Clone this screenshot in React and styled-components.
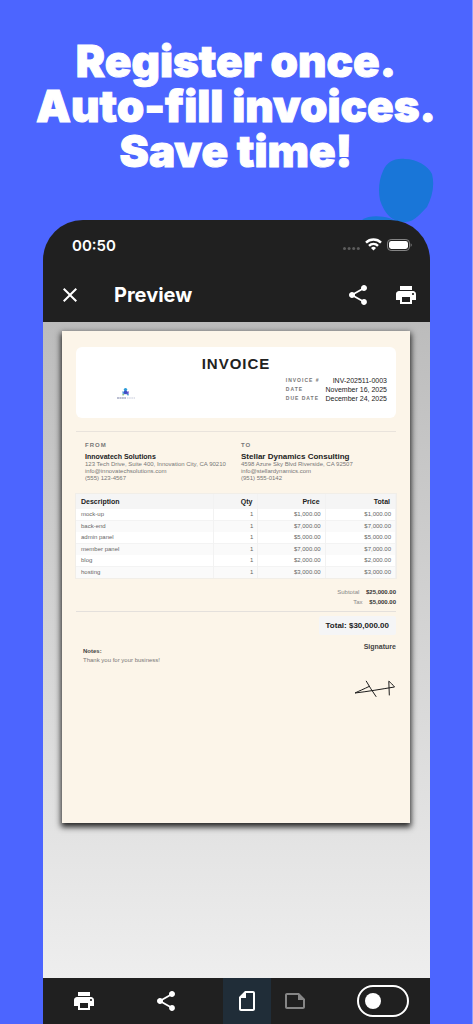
import React, { useState } from "react";
import styled, { createGlobalStyle } from "styled-components";
import { MdClose, MdOutlineNote, MdPrint, MdShare } from "react-icons/md";

const items = [
  { name: "mock-up", qty: 1, price: "$1,000.00" },
  { name: "back-end", qty: 1, price: "$7,000.00" },
  { name: "admin panel", qty: 1, price: "$5,000.00" },
  { name: "member panel", qty: 1, price: "$7,000.00" },
  { name: "blog", qty: 1, price: "$2,000.00" },
  { name: "hosting", qty: 1, price: "$3,000.00" },
];

const StatusIcons = () => (
  <svg width="70" height="16" viewBox="0 0 70 16" aria-hidden="true">
    <g fill="#5c5c5c">
      <circle cx="1.5" cy="11.5" r="1.5" />
      <circle cx="6.1" cy="11.5" r="1.5" />
      <circle cx="10.7" cy="11.5" r="1.5" />
      <circle cx="15.3" cy="11.5" r="1.5" />
    </g>
    <g fill="none" stroke="#fff" strokeWidth="2.4">
      <path d="M23 5.6a10.6 10.6 0 0 1 15 0" />
      <path d="M26 8.8a6.3 6.3 0 0 1 9 0" />
    </g>
    <path d="M30.5 13.6l-2.5-2.500a3.500 3.500 0 0 1 5 0z" fill="#fff" />
    <rect x="44.5" y="2.500" width="22" height="11" rx="3.600" fill="none" stroke="#858585" />
    <rect x="46" y="4" width="19" height="8" rx="2.400" fill="#fff" />
    <path d="M67.700 6.300v3.600c1.300-.6 1.300-3 0-3.600z" fill="#858585" />
  </svg>
);

const CompanyLogo = () => (
  <svg width="20" height="14" viewBox="0 0 20 14" role="img" aria-label="Innovatech logo">
    <circle cx="9.5" cy="2.6" r="1.7" fill="#2b9bd8" />
    <path d="M6.3 4.3l2.4.4v2.6l-2 1.2-.2-2z" fill="#5aa5dd" />
    <path d="M12.8 4.3l-2.4.4v2.6l2 1.2.2-2z" fill="#6b55cf" />
    <circle cx="9.5" cy="5.4" r="1.8" fill="#3f4fc4" />
    <circle cx="7.2" cy="7.7" r=".8" fill="#9acb62" />
    <circle cx="11.9" cy="7.7" r=".8" fill="#36b8cf" />
    <path d="M1 11h9" stroke="#7980a5" strokeWidth="1.2" strokeDasharray="2 .4" />
    <path d="M11 11h8" stroke="#c3c7d8" strokeDasharray="1.5 .7" />
  </svg>
);

const App = () => {
  const [landscape, setLandscape] = useState(false);
  const [debug, setDebug] = useState(false);

  return (
    <Page>
      <GlobalStyle />
      <Headline>
        Register once.
        <br />
        Auto-fill invoices.
        <br />
        Save time!
      </Headline>
      <PhoneWrapper>
        <Blob viewBox="0 0 72 66" aria-hidden="true">
          <path d="M43 1C32 0 25 4 21 13C17 22 16 32 18 42C22 54 29 64 42 64C52 65 60 54 65 49C70 39 73 28 70 16C66 8 55 1 43 1Z" />
          <path d="M0 62C7 57 19 58 27 60L42 66H0Z" />
        </Blob>
        <Phone>
          <StatusBar>
            <time>00:50</time>
            <StatusIcons />
          </StatusBar>
          <AppBar>
            <IconButton aria-label="Close">
              <MdClose />
            </IconButton>
            <h2>Preview</h2>
            <IconButton aria-label="Share">
              <MdShare />
            </IconButton>
            <IconButton aria-label="Print">
              <MdPrint />
            </IconButton>
          </AppBar>

          <PreviewArea>
            <Paper>
              <InvoiceHead>
                <h3>INVOICE</h3>
                <div>
                  <CompanyLogo />
                  <Meta>
                    <dt>INVOICE #</dt>
                    <dd>INV-202511-0003</dd>
                    <dt>DATE</dt>
                    <dd>November 16, 2025</dd>
                    <dt>DUE DATE</dt>
                    <dd>December 24, 2025</dd>
                  </Meta>
                </div>
              </InvoiceHead>

              <Parties>
                <Party>
                  <h4>FROM</h4>
                  <PartyName>Innovatech Solutions</PartyName>
                  <p>123 Tech Drive, Suite 400, Innovation City, CA 90210</p>
                  <p>info@innovatechsolutions.com</p>
                  <p>(555) 123-4567</p>
                </Party>
                <Party>
                  <h4>TO</h4>
                  <PartyName $large>Stellar Dynamics Consulting</PartyName>
                  <p>4598 Azure Sky Blvd Riverside, CA 92507</p>
                  <p>info@stellardynamics.com</p>
                  <p>(951) 555-0142</p>
                </Party>
              </Parties>

              <ItemsTable>
                <colgroup>
                  <col style={{ width: "43%" }} />
                  <col style={{ width: "14%" }} />
                  <col style={{ width: "21%" }} />
                  <col style={{ width: "22%" }} />
                </colgroup>
                <thead>
                  <tr>
                    <th>Description</th>
                    <th>Qty</th>
                    <th>Price</th>
                    <th>Total</th>
                  </tr>
                </thead>
                <tbody>
                  {items.map((item) => (
                    <tr key={item.name}>
                      <td>{item.name}</td>
                      <td>{item.qty}</td>
                      <td>{item.price}</td>
                      <td>{item.price}</td>
                    </tr>
                  ))}
                </tbody>
              </ItemsTable>

              <Sums>
                <p>
                  Subtotal <b>$25,000.00</b>
                </p>
                <p>
                  Tax <b>$5,000.00</b>
                </p>
              </Sums>
              <GrandTotal>
                <strong>Total: $30,000.00</strong>
              </GrandTotal>

              <Closing>
                <Notes>
                  <b>Notes:</b>
                  <p>Thank you for your business!</p>
                </Notes>
                <Signature>
                  <b>Signature</b>
                  <svg width="42" height="18" viewBox="0 0 42 18" role="img" aria-label="Signature">
                    <path d="M15 6.5C10 9 5 11 1 13C14 11.5 28 9 40.5 7C39 5 36.5 2.5 34.8 1.2L35.3 15" />
                    <path d="M12.3 1.2C15 6 18.5 11.5 22 16.5" />
                  </svg>
                </Signature>
              </Closing>
            </Paper>
          </PreviewArea>

          <BottomBar>
            <IconButton aria-label="Print">
              <MdPrint />
            </IconButton>
            <IconButton aria-label="Share">
              <MdShare />
            </IconButton>
            <Orientation>
              <OrientationButton
                aria-label="Portrait"
                $active={!landscape}
                $rotated
                onClick={() => setLandscape(false)}
              >
                <MdOutlineNote />
              </OrientationButton>
              <OrientationButton
                aria-label="Landscape"
                $active={landscape}
                onClick={() => setLandscape(true)}
              >
                <MdOutlineNote />
              </OrientationButton>
            </Orientation>
            <SwitchLabel>
              <Switch
                type="checkbox"
                role="switch"
                aria-label="Debug"
                checked={debug}
                onChange={(e) => setDebug(e.target.checked)}
              />
            </SwitchLabel>
          </BottomBar>
        </Phone>
      </PhoneWrapper>
    </Page>
  );
};

const GlobalStyle = createGlobalStyle`
  * {
    box-sizing: border-box;
  }
  body {
    margin: 0;
    background: #4c65ff;
  }
  h1, h2, h3, h4, p, dl, dd {
    margin: 0;
  }
`;

const Page = styled.main`
  min-height: 100vh;
  display: flex;
  flex-direction: column;
  background: #4c65ff;
  border-right: 1px solid #8f9eff;
`;

const Headline = styled.h1`
  padding: 39px 0 46px;
  text-align: center;
  white-space: nowrap;
  color: #fff;
  font-family: Inter, sans-serif;
  font-size: 44px;
  font-weight: 900;
  line-height: 45px;
  -webkit-text-stroke: 1px #fff;
`;

const PhoneWrapper = styled.div`
  position: relative;
  flex: 1;
  display: flex;
  margin: 0 42px 0 43px;
`;

const Blob = styled.svg`
  position: absolute;
  top: -62px;
  right: -4px;
  width: 72px;
  height: 66px;
  fill: #1976d8;
`;

const Phone = styled.section`
  position: relative;
  flex: 1;
  min-width: 0;
  display: flex;
  flex-direction: column;
  overflow: hidden;
  border-radius: 40px 40px 0 0;
  background: #202020;
  color: #fff;
  font-family: Inter, sans-serif;
`;

const StatusBar = styled.div`
  display: flex;
  align-items: center;
  justify-content: space-between;
  height: 50px;
  padding: 0 17px 0 29px;
  time {
    font-size: 15px;
    font-weight: 600;
  }
`;

const AppBar = styled.header`
  display: flex;
  align-items: center;
  height: 52px;
  padding: 0 0 2px 3px;
  h2 {
    flex: 1;
    padding-left: 20px;
    font-size: 20px;
    font-weight: 700;
    line-height: 24px;
  }
`;

const IconButton = styled.button`
  display: flex;
  align-items: center;
  justify-content: center;
  width: 48px;
  height: 46px;
  padding: 0;
  border: none;
  background: none;
  color: #fff;
  font-size: 24px;
`;

const PreviewArea = styled.div`
  flex: 1;
  padding: 9px 20px 20px 19px;
  background: linear-gradient(#bcbcbc, #eee);
`;

const Paper = styled.article`
  aspect-ratio: 348 / 492;
  padding: 16px 14px;
  background: #fcf5e9;
  box-shadow: 0 3px 6px 1px rgba(0, 0, 0, 0.85);
  color: #222;
  font-family: "Liberation Sans", Arial, sans-serif;
  font-size: 6px;
  line-height: 7px;
`;

const InvoiceHead = styled.header`
  height: 71px;
  padding: 8px 9px;
  border-radius: 6px;
  background: #fff;
  h3 {
    text-align: center;
    font-size: 15px;
    line-height: 18px;
    letter-spacing: 1px;
  }
  div {
    display: flex;
    justify-content: space-between;
    padding: 3px 0 0 31px;
  }
  svg {
    margin-top: 11px;
  }
`;

const Meta = styled.dl`
  display: grid;
  grid-template-columns: auto auto;
  column-gap: 6px;
  line-height: 9px;
  dt {
    color: #777;
    font-size: 5px;
    font-weight: 700;
    letter-spacing: 1px;
  }
  dd {
    text-align: right;
    font-size: 7px;
  }
`;

const Parties = styled.section`
  display: grid;
  grid-template-columns: 156px 1fr;
  margin-top: 13px;
  padding: 10px 0 12px 9px;
  border-top: 1px solid #e9e3dc;
`;

const Party = styled.div`
  white-space: nowrap;
  color: #777;
  h4 {
    margin-bottom: 4px;
    font-size: 6px;
    line-height: 7px;
    letter-spacing: 1px;
  }
`;

const PartyName = styled.strong`
  display: block;
  color: #222;
  font-size: ${(props) => (props.$large ? "8px" : "7px")};
  line-height: 8px;
`;

const ItemsTable = styled.table`
  width: 100%;
  table-layout: fixed;
  border-spacing: 0;
  background: #fff;
  outline: 1px solid #f1eee8;
  line-height: 11px;
  th,
  td {
    padding: 0 4px;
    text-align: right;
    border-right: 1px solid #f2f2f2;
  }
  th {
    padding: 0 5px;
    font-size: 7px;
    line-height: 15px;
    background: #f5f5f5;
  }
  td {
    color: #666;
  }
  th:first-child,
  td:first-child {
    padding-left: 5px;
    text-align: left;
  }
  tbody tr:nth-child(odd) td {
    border-bottom: 1px solid #f3f3f3;
  }
  tbody tr:nth-child(even) {
    background: #fafafa;
  }
`;

const Sums = styled.div`
  padding: 9px 0 4px;
  border-bottom: 1px solid #e4e0dc;
  text-align: right;
  line-height: 10px;
  color: #888;
  b {
    margin-left: 5px;
    color: #333;
  }
`;

const GrandTotal = styled.div`
  display: flex;
  justify-content: flex-end;
  padding-top: 4px;
  strong {
    padding: 0 7px;
    border-radius: 2px;
    background: #f5f5f6;
    font-size: 8px;
    line-height: 19px;
  }
`;

const Closing = styled.footer`
  display: flex;
  justify-content: space-between;
  padding: 8px 0 0 7px;
  color: #444;
`;

const Notes = styled.div`
  padding-top: 5px;
  p {
    margin-top: 2px;
    color: #777;
  }
`;

const Signature = styled.div`
  display: flex;
  flex-direction: column;
  align-items: flex-end;
  gap: 30px;
  b {
    font-size: 7px;
  }
  path {
    fill: none;
    stroke: #1c1c1c;
    stroke-linecap: round;
  }
`;

const BottomBar = styled.nav`
  display: flex;
  align-items: center;
  justify-content: space-around;
  height: 46px;
`;

const Orientation = styled.div`
  display: flex;
`;

const OrientationButton = styled(IconButton)`
  background: ${(props) => (props.$active ? "#202d38" : "none")};
  color: ${(props) => (props.$active ? "#fff" : "#868686")};
  svg {
    transform: ${(props) => (props.$rotated ? "rotate(-90deg)" : "none")};
  }
`;

const SwitchLabel = styled.label`
  display: flex;
  justify-content: center;
  width: 60px;
`;

const Switch = styled.input`
  appearance: none;
  display: flex;
  align-items: center;
  width: 52px;
  height: 32px;
  margin: 0;
  padding: 0 6px;
  border: 2px solid #fff;
  border-radius: 16px;
  &::before {
    content: "";
    width: 16px;
    height: 16px;
    border-radius: 50%;
    background: #fff;
  }
  &:checked {
    justify-content: flex-end;
  }
`;

export default App;
